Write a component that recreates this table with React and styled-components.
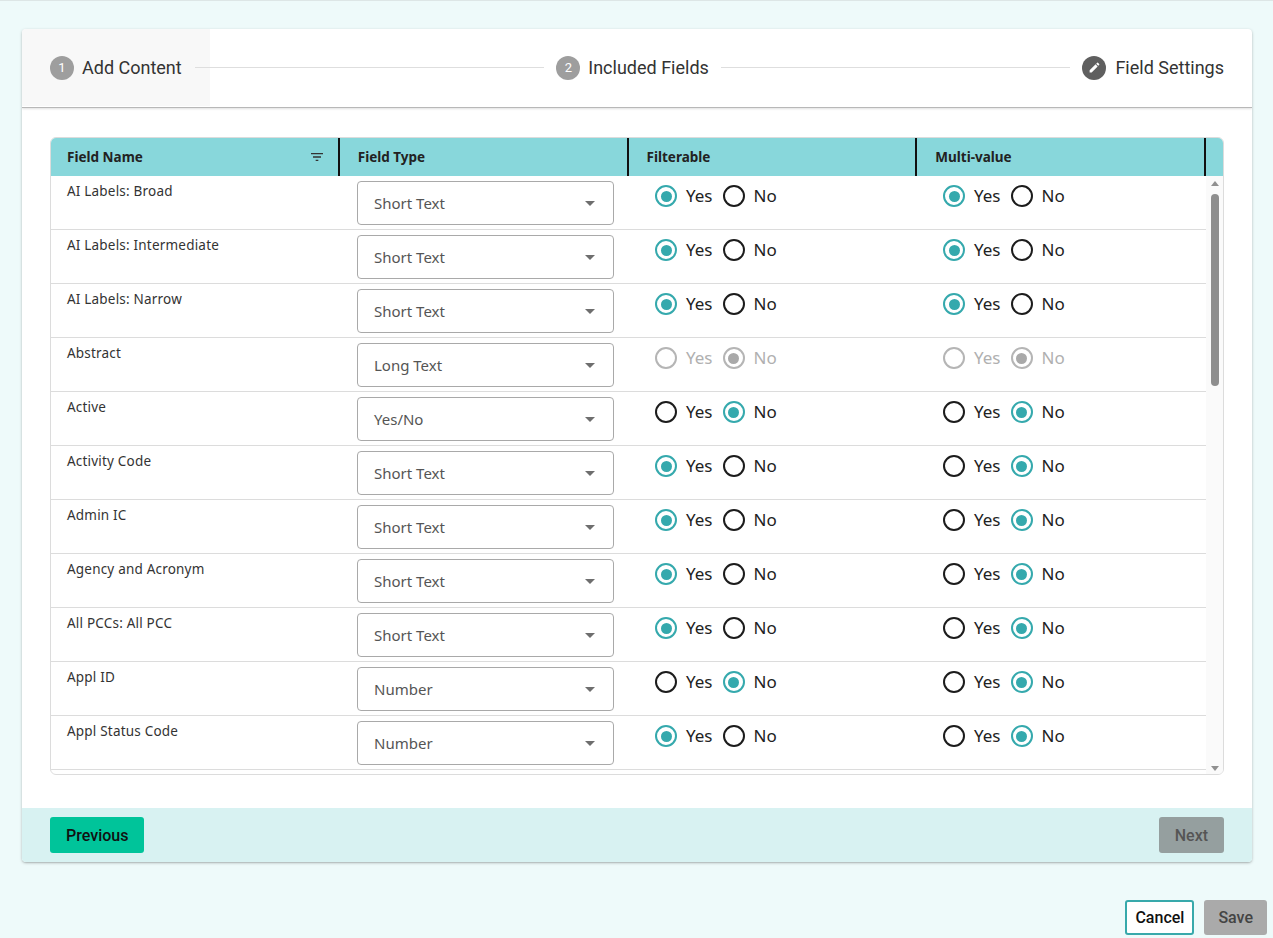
import React from "react";
import styled, { createGlobalStyle } from "styled-components";

const GlobalStyle = createGlobalStyle`
  html, body { margin: 0; padding: 0; }
  body {
    background: #eefafa;
    font-family: "Noto Sans", "Open Sans", sans-serif;
    border-top: 1px solid #dde6e6;
    height: 937px;
    overflow: hidden;
  }
  * { box-sizing: border-box; }
`;

const Page = styled.div`
  padding-top: 28px;
`;

const Card = styled.div`
  margin: 0 21px 0 22px;
  background: #fff;
  border-radius: 4px;
  box-shadow: 0 1px 3px rgba(0, 0, 0, 0.25), 0 1px 1px rgba(0, 0, 0, 0.08);
  overflow: hidden;
`;

const Stepper = styled.div`
  display: flex;
  align-items: center;
  height: 79px;
  padding-right: 28px;
  padding-bottom: 1px;
  border-bottom: 1px solid #b8b8b8;
  box-shadow: 0 1px 2px rgba(0, 0, 0, 0.12);
  font-family: Roboto, sans-serif;
`;

const Step = styled.div`
  display: flex;
  align-items: center;
  gap: ${(p) => (p.$icon ? 9 : 8)}px;
  height: 100%;
  padding: ${(p) => (p.$first ? "0 28px 0 28px" : "0")};
  background: ${(p) => (p.$first ? "#f8f8f8" : "transparent")};
  font-size: 18px;
  color: #333;
  white-space: nowrap;
`;

const StepNum = styled.span`
  width: 24px;
  height: 24px;
  border-radius: 50%;
  background: #9e9e9e;
  color: #fff;
  font-size: 13px;
  display: flex;
  align-items: center;
  justify-content: center;
`;

const StepIcon = styled.span`
  width: 24px;
  height: 24px;
  border-radius: 50%;
  background: #5f5f5f;
  display: flex;
  align-items: center;
  justify-content: center;
`;

const Connector = styled.div`
  flex: 1;
  height: 1px;
  background: #dedede;
  margin: 0 12px 0 ${(p) => (p.$afterFirst ? "-15px" : "12px")};
`;

const Body = styled.div`
  padding: 29px 28px 33px 28px;
`;

const Table = styled.div`
  border: 1px solid #dcdcdc;
  border-radius: 6px;
  overflow: hidden;
`;

const HeaderRow = styled.div`
  display: grid;
  grid-template-columns: repeat(4, 1fr) 17px;
  height: 38px;
  background: #88d7db;
`;

const HeaderCell = styled.div`
  display: flex;
  align-items: center;
  justify-content: space-between;
  padding: 0 13px 0 ${(p) => (p.$first ? 16 : 18)}px;
  border-right: 2px solid #111;
  font-size: 13.5px;
  font-weight: 700;
  color: #222;
`;

const HeaderGap = styled.div``;

const BodyArea = styled.div`
  display: flex;
  height: 598px;
`;

const Rows = styled.div`
  flex: 1;
  overflow: hidden;
`;

const Row = styled.div`
  display: grid;
  grid-template-columns: repeat(4, 1fr);
  height: 54px;
  border-bottom: 1px solid #dcdcdc;
`;

const NameCell = styled.div`
  padding: 6px 16px 0 16px;
  font-size: 13.5px;
  line-height: 18px;
  color: #333;
  letter-spacing: 0.2px;
`;

const SelectCell = styled.div`
  padding: 5px 16px 0 18px;
`;

const SelectBox = styled.div`
  width: 257px;
  height: 44px;
  border: 1px solid #a9a9a9;
  border-radius: 4px;
  display: flex;
  align-items: center;
  justify-content: space-between;
  padding: 0 18px 0 16px;
  font-size: 15px;
  color: #555;
`;

const Caret = styled.span`
  width: 0;
  height: 0;
  border-left: 5px solid transparent;
  border-right: 5px solid transparent;
  border-top: 5px solid #6e6e6e;
`;

const RadioCell = styled.div`
  padding: 8px 0 0 25px;
  display: flex;
  align-items: flex-start;
`;

const RadioOption = styled.label`
  display: flex;
  align-items: center;
  gap: 9px;
  margin-right: 10px;
  font-size: 17px;
  line-height: 24px;
  color: ${(p) => (p.$disabled ? "#b0b0b0" : "#222")};
`;

const RadioCircle = styled.span`
  width: 22px;
  height: 22px;
  border-radius: 50%;
  border: 2.5px solid
    ${(p) => (p.$disabled ? "#b5b5b5" : p.$checked ? "#35a9ad" : "#1c1c1c")};
  display: flex;
  align-items: center;
  justify-content: center;
  &::after {
    content: "";
    display: ${(p) => (p.$checked ? "block" : "none")};
    width: 11px;
    height: 11px;
    border-radius: 50%;
    background: ${(p) => (p.$disabled ? "#a9a9a9" : "#35a9ad")};
  }
`;

const ScrollTrack = styled.div`
  width: 17px;
  background: #fafafa;
  display: flex;
  flex-direction: column;
  align-items: center;
  padding: 5px 0 3px;
`;

const ScrollArrow = styled.span`
  width: 0;
  height: 0;
  border-left: 4px solid transparent;
  border-right: 4px solid transparent;
  ${(p) =>
    p.$up
      ? "border-bottom: 5px solid #909090;"
      : "border-top: 5px solid #909090;"}
`;

const ScrollSpace = styled.div`
  flex: 1;
  width: 100%;
  display: flex;
  flex-direction: column;
  align-items: center;
  padding-top: 8px;
`;

const ScrollThumb = styled.div`
  width: 8px;
  height: 192px;
  border-radius: 4px;
  background: #8e8e8e;
`;

const Footer = styled.div`
  display: flex;
  justify-content: space-between;
  align-items: center;
  height: 54px;
  padding: 0 28px;
  background: #d8f2f2;
`;

const Button = styled.button`
  font-family: Roboto, sans-serif;
  font-size: 16px;
  font-weight: 500;
  height: ${(p) => (p.$small ? 35 : 36)}px;
  padding: 0 ${(p) => p.$px || 16}px;
  border-radius: 3px;
  cursor: pointer;
  border: ${(p) => (p.$outline ? "2px solid #38a9ab" : "none")};
  background: ${(p) => p.$bg || "#fff"};
  color: ${(p) => p.$color || "#111"};
`;

const Actions = styled.div`
  display: flex;
  justify-content: flex-end;
  gap: 10px;
  padding-right: 6px;
  margin-top: 38px;
`;

const FilterIcon = () => (
  <svg width="16" height="16" viewBox="0 0 24 24" fill="#333">
    <path d="M10 18h4v-2h-4v2zM3 6v2h18V6H3zm3 7h12v-2H6v2z" />
  </svg>
);

const PencilIcon = () => (
  <svg width="13" height="13" viewBox="0 0 24 24" fill="#fff">
    <path d="M3 17.25V21h3.75L17.81 9.94l-3.75-3.75L3 17.25zM20.71 7.04c.39-.39.39-1.02 0-1.41l-2.34-2.34a.996.996 0 0 0-1.41 0l-1.83 1.83 3.75 3.75 1.83-1.83z" />
  </svg>
);

const rows = [
  ["AI Labels: Broad", "Short Text", true, true],
  ["AI Labels: Intermediate", "Short Text", true, true],
  ["AI Labels: Narrow", "Short Text", true, true],
  ["Abstract", "Long Text", false, false, true],
  ["Active", "Yes/No", false, false],
  ["Activity Code", "Short Text", true, false],
  ["Admin IC", "Short Text", true, false],
  ["Agency and Acronym", "Short Text", true, false],
  ["All PCCs: All PCC", "Short Text", true, false],
  ["Appl ID", "Number", false, false],
  ["Appl Status Code", "Number", true, false],
  ["Appl Type", "Short Text", true, false],
];

const YesNo = ({ value, disabled }) => (
  <RadioCell>
    <RadioOption $disabled={disabled}>
      <RadioCircle $checked={value} $disabled={disabled} />
      Yes
    </RadioOption>
    <RadioOption $disabled={disabled}>
      <RadioCircle $checked={!value} $disabled={disabled} />
      No
    </RadioOption>
  </RadioCell>
);

export default function App() {
  return (
    <>
      <GlobalStyle />
      <Page>
        <Card>
          <Stepper>
            <Step $first>
              <StepNum>1</StepNum>
              Add Content
            </Step>
            <Connector $afterFirst />
            <Step>
              <StepNum>2</StepNum>
              Included Fields
            </Step>
            <Connector />
            <Step $icon>
              <StepIcon>
                <PencilIcon />
              </StepIcon>
              Field Settings
            </Step>
          </Stepper>
          <Body>
            <Table>
              <HeaderRow>
                <HeaderCell $first>
                  Field Name
                  <FilterIcon />
                </HeaderCell>
                <HeaderCell>Field Type</HeaderCell>
                <HeaderCell>Filterable</HeaderCell>
                <HeaderCell>Multi-value</HeaderCell>
                <HeaderGap />
              </HeaderRow>
              <BodyArea>
                <Rows>
                  {rows.map(([name, type, f, m, dis]) => (
                    <Row key={name}>
                      <NameCell>{name}</NameCell>
                      <SelectCell>
                        <SelectBox>
                          {type}
                          <Caret />
                        </SelectBox>
                      </SelectCell>
                      <YesNo value={f} disabled={dis} />
                      <YesNo value={m} disabled={dis} />
                    </Row>
                  ))}
                </Rows>
                <ScrollTrack>
                  <ScrollArrow $up />
                  <ScrollSpace>
                    <ScrollThumb />
                  </ScrollSpace>
                  <ScrollArrow />
                </ScrollTrack>
              </BodyArea>
            </Table>
          </Body>
          <Footer>
            <Button $bg="#00c49a" $px={16}>
              Previous
            </Button>
            <Button $bg="#959f9f" $color="#555" $px={16}>
              Next
            </Button>
          </Footer>
        </Card>
        <Actions>
          <Button $outline $small $px={8}>
            Cancel
          </Button>
          <Button $bg="#aaaaaa" $color="#444" $small $px={14}>
            Save
          </Button>
        </Actions>
      </Page>
    </>
  );
}
